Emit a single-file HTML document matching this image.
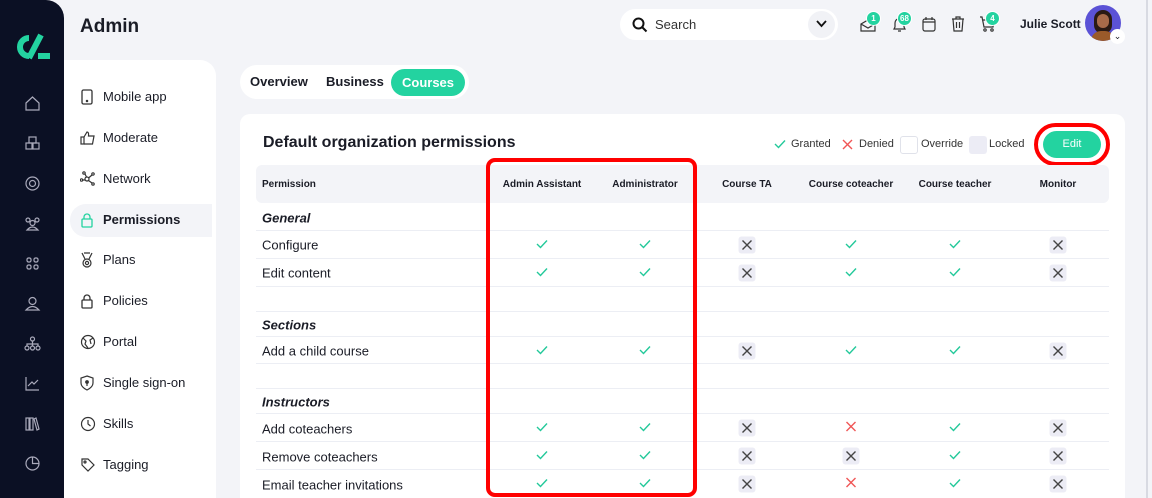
<!DOCTYPE html>
<html><head><meta charset="utf-8"><style>
*{margin:0;padding:0;box-sizing:border-box}
html,body{width:1152px;height:498px;overflow:hidden}
body{background:#f3f4f8;font-family:"Liberation Sans",sans-serif;color:#1a1c26;position:relative}
.a{position:absolute}
.side{left:0;top:0;width:64px;height:498px;background:#0b1024;border-top-right-radius:18px}
.si{position:absolute;left:24px;width:17px;height:17px}
.nav{left:64px;top:60px;width:152px;height:438px;background:#fff;border-top-right-radius:16px}
.ni{position:absolute;left:16px;font-size:13px;height:20px;line-height:20px;color:#1a1c26}
.ni svg{position:absolute;left:0;top:2px}
.ni span{position:absolute;left:23px;white-space:nowrap}
.card{left:240px;top:114px;width:885px;height:384px;background:#fff;border-radius:10px 10px 0 0}
.th{position:absolute;top:165px;left:256px;width:853px;height:38px;background:#f3f4f8;border-radius:6px}
.hc{position:absolute;top:179px;font-size:10px;font-weight:bold;transform:translateX(-50%);white-space:nowrap}
.row{position:absolute;left:256px;width:853px;border-bottom:1px solid #eceef4}
.lab{position:absolute;left:262px;font-size:13px;transform:translateY(-50%);white-space:nowrap}
.sec{font-weight:bold;font-style:italic}
.ic{position:absolute;transform:translate(-50%,-50%)}
.lk{width:17px;height:17px;background:#ececf5;border-radius:3px;display:flex;align-items:center;justify-content:center}
.badge{position:absolute;background:#23d3a0;color:#fff;font-size:8px;font-weight:bold;border-radius:8px;height:15px;min-width:15px;padding:0 2px;text-align:center;line-height:13px;border:1px solid #fff}
</style></head><body>
<div class="a side">
<svg class="a" style="left:12px;top:33px" width="40" height="28" viewBox="0 0 40 28"><path d="M17 5 A9 9 0 1 0 17 23" stroke="#23d3a0" stroke-width="6" fill="none"/><path d="M29 2 L17 25" stroke="#23d3a0" stroke-width="6"/><rect x="26" y="20" width="12" height="6" fill="#23d3a0"/></svg>
<svg class="si" style="top:95px" viewBox="0 0 17 17" fill="none" stroke="#aab" stroke-width="1.2"><path d="M2 8 L8.5 2 L15 8 V15 H2Z"/></svg>
<svg class="si" style="top:135px" viewBox="0 0 17 17" fill="none" stroke="#aab" stroke-width="1.2"><rect x="5" y="2" width="7" height="6"/><rect x="2" y="8" width="6" height="6"/><rect x="9" y="8" width="6" height="6"/></svg>
<svg class="si" style="top:175px" viewBox="0 0 17 17" fill="none" stroke="#aab" stroke-width="1.2"><circle cx="8.5" cy="8.5" r="6.5"/><circle cx="8.5" cy="8.5" r="3"/></svg>
<svg class="si" style="top:215px" viewBox="0 0 17 17" fill="none" stroke="#aab" stroke-width="1.2"><circle cx="4" cy="5" r="2"/><circle cx="13" cy="5" r="2"/><circle cx="8.5" cy="8" r="2.5"/><path d="M3 15 Q8.5 9 14 15Z"/></svg>
<svg class="si" style="top:255px" viewBox="0 0 17 17" fill="none" stroke="#aab" stroke-width="1.2"><rect x="3" y="3" width="4" height="4" rx="1.5"/><rect x="10" y="3" width="4" height="4" rx="1.5"/><rect x="3" y="10" width="4" height="4" rx="1.5"/><rect x="10" y="10" width="4" height="4" rx="1.5"/></svg>
<svg class="si" style="top:295px" viewBox="0 0 17 17" fill="none" stroke="#aab" stroke-width="1.2"><circle cx="8.5" cy="6" r="3.5"/><path d="M2 15 Q8.5 8 15 15Z"/></svg>
<svg class="si" style="top:335px" viewBox="0 0 17 17" fill="none" stroke="#aab" stroke-width="1.2"><circle cx="8.5" cy="4" r="2"/><circle cx="3" cy="13" r="2"/><circle cx="8.5" cy="13" r="2"/><circle cx="14" cy="13" r="2"/><path d="M8.5 6V11M3 11V9H14V11"/></svg>
<svg class="si" style="top:375px" viewBox="0 0 17 17" fill="none" stroke="#aab" stroke-width="1.2"><path d="M2 2V15H15M4 11L8 7L10 9L14 5"/></svg>
<svg class="si" style="top:415px" viewBox="0 0 17 17" fill="none" stroke="#aab" stroke-width="1.2"><rect x="2" y="3" width="3" height="12"/><rect x="6" y="3" width="3" height="12"/><path d="M10 4L12 3L15 14L13 15Z"/></svg>
<svg class="si" style="top:455px" viewBox="0 0 17 17" fill="none" stroke="#aab" stroke-width="1.2"><circle cx="8.5" cy="8.5" r="6.5"/><path d="M8.5 2V8.5H15"/></svg>
</div>
<div class="a" style="left:80px;top:16px;font-size:19px;font-weight:bold">Admin</div>
<div class="a nav">
<div class="a" style="left:6px;top:144px;width:142px;height:33px;background:#f3f4f8;border-radius:16px 0 0 16px"></div>
<div class="ni" style="top:27px"><svg width="14" height="16" viewBox="0 0 14 16" fill="none" stroke="#333" stroke-width="1.3"><rect x="2" y="1" width="10" height="14" rx="1.5"/><circle cx="7" cy="12" r=".6" fill="#333"/></svg><span>Mobile app</span></div>
<div class="ni" style="top:68px"><svg width="16" height="16" viewBox="0 0 16 16" fill="none" stroke="#333" stroke-width="1.2"><rect x="1" y="7" width="3" height="7"/><path d="M4 7L7 2Q9 2 8.5 6H14L12.5 14H4"/></svg><span>Moderate</span></div>
<div class="ni" style="top:109px"><svg width="16" height="16" viewBox="0 0 16 16" fill="none" stroke="#333" stroke-width="1.2"><circle cx="7" cy="8" r="2"/><circle cx="4" cy="2" r="1.2"/><circle cx="13" cy="3" r="1.2"/><circle cx="1.5" cy="9" r="1.2"/><circle cx="13" cy="13" r="1.2"/><path d="M5 3L6.5 6M12 4L8.5 7M3 9H5M8.5 9.5L12 12"/></svg><span>Network</span></div>
<div class="ni" style="top:150px"><svg width="14" height="16" viewBox="0 0 14 16" fill="none" stroke="#23d3a0" stroke-width="1.3"><rect x="2" y="7" width="10" height="8" rx="1"/><path d="M4 7V5A3 3 0 0 1 10 5V7"/></svg><span style="font-weight:bold">Permissions</span></div>
<div class="ni" style="top:190px"><svg width="14" height="16" viewBox="0 0 14 16" fill="none" stroke="#333" stroke-width="1.2"><path d="M2 1L5 7M12 1L9 7M4 1H10"/><circle cx="7" cy="11" r="4"/><circle cx="7" cy="11" r="1.6"/></svg><span>Plans</span></div>
<div class="ni" style="top:231px"><svg width="14" height="16" viewBox="0 0 14 16" fill="none" stroke="#333" stroke-width="1.3"><rect x="2" y="7" width="10" height="8" rx="1"/><path d="M4 7V5A3 3 0 0 1 10 5V7"/></svg><span>Policies</span></div>
<div class="ni" style="top:272px"><svg width="16" height="16" viewBox="0 0 16 16" fill="none" stroke="#333" stroke-width="1.2"><circle cx="8" cy="8" r="6.5"/><path d="M3 4L6 7L5 10L8 14M13 4L10 6L11 10"/></svg><span>Portal</span></div>
<div class="ni" style="top:313px"><svg width="14" height="16" viewBox="0 0 14 16" fill="none" stroke="#333" stroke-width="1.2"><path d="M7 1L13 3V8Q13 12 7 15Q1 12 1 8V3Z"/><circle cx="7" cy="7" r="1.3" fill="#333"/><path d="M7 8V11"/></svg><span>Single sign-on</span></div>
<div class="ni" style="top:354px"><svg width="16" height="16" viewBox="0 0 16 16" fill="none" stroke="#333" stroke-width="1.2"><circle cx="8" cy="8" r="6.5"/><path d="M8 4V8L10.5 10"/></svg><span>Skills</span></div>
<div class="ni" style="top:395px"><svg width="16" height="16" viewBox="0 0 16 16" fill="none" stroke="#333" stroke-width="1.2"><path d="M2 2H8L14 8L8 14L2 8Z"/><circle cx="5" cy="5" r="1"/></svg><span>Tagging</span></div>
</div>
<!-- tabs -->
<div class="a" style="left:240px;top:65px;width:229px;height:34px;background:#fff;border-radius:17px"></div>
<div class="a" style="left:250px;top:74px;font-size:13px;font-weight:bold">Overview</div>
<div class="a" style="left:326px;top:74px;font-size:13px;font-weight:bold">Business</div>
<div class="a" style="left:391px;top:69px;width:74px;height:27px;background:#23d3a0;border-radius:14px;color:#fff;font-size:13px;font-weight:bold;text-align:center;line-height:27px">Courses</div>
<!-- top bar -->
<div class="a" style="left:620px;top:9px;width:218px;height:31px;background:#fff;border-radius:16px"></div>
<svg class="a" style="left:632px;top:17px" width="16" height="16" viewBox="0 0 16 16" fill="none" stroke="#111" stroke-width="2"><circle cx="6.5" cy="6.5" r="5"/><path d="M10 10L14.5 14.5"/></svg>
<div class="a" style="left:655px;top:17px;font-size:13px;color:#333">Search</div>
<div class="a" style="left:808px;top:11px;width:27px;height:27px;background:#f1f2f6;border-radius:50%"></div>
<svg class="a" style="left:815px;top:18px" width="13" height="12" viewBox="0 0 13 12" fill="none" stroke="#111" stroke-width="1.8"><path d="M2 3L6.5 8L11 3"/></svg>
<svg class="a" style="left:860px;top:17px" width="16" height="16" viewBox="0 0 16 16" fill="none" stroke="#333" stroke-width="1.2"><path d="M1 7L8 3L15 7V14H1Z M1 7L8 11L15 7"/></svg>
<div class="badge" style="left:866px;top:11px">1</div>
<svg class="a" style="left:892px;top:16px" width="15" height="17" viewBox="0 0 15 17" fill="none" stroke="#333" stroke-width="1.2"><path d="M2 13H13L12 11V7A4.5 4.5 0 0 0 3 7V11Z M6 15H9"/></svg>
<div class="badge" style="left:897px;top:11px">68</div>
<svg class="a" style="left:922px;top:16px" width="14" height="16" viewBox="0 0 14 16" fill="none" stroke="#333" stroke-width="1.2"><rect x="1" y="3" width="12" height="12" rx="2"/><path d="M1 6H13M4 1V4M10 1V4"/></svg>
<svg class="a" style="left:951px;top:16px" width="14" height="16" viewBox="0 0 14 16" fill="none" stroke="#333" stroke-width="1.2"><path d="M1 3H13M5 3V1H9V3M2 3L3 15H11L12 3M5.5 6V12M8.5 6V12"/></svg>
<svg class="a" style="left:979px;top:16px" width="17" height="16" viewBox="0 0 17 16" fill="none" stroke="#333" stroke-width="1.2"><path d="M1 1H3L5 11H14L15 4H4"/><circle cx="6" cy="14" r="1.2"/><circle cx="13" cy="14" r="1.2"/></svg>
<div class="badge" style="left:985px;top:11px">4</div>
<div class="a" style="left:1020px;top:17px;font-size:12px;font-weight:bold">Julie Scott</div>
<div class="a" style="left:1085px;top:5px;width:36px;height:36px;border-radius:50%;background:#5b52d6;overflow:hidden">
<div class="a" style="left:9px;top:5px;width:18px;height:24px;border-radius:9px;background:#2a1a14"></div>
<div class="a" style="left:12px;top:9px;width:12px;height:14px;border-radius:6px;background:#a86b4a"></div>
<div class="a" style="left:6px;top:26px;width:24px;height:14px;border-radius:10px 10px 0 0;background:#9a5a2a"></div>
</div>
<div class="a" style="left:1110px;top:29px;width:15px;height:15px;border-radius:50%;background:#fff;font-size:9px;text-align:center;line-height:14px">⌄</div>
<div class="a" style="left:1146px;top:0;width:2px;height:498px;background:#d8dae2"></div>
<!-- card -->
<div class="a card"></div>
<div class="a" style="left:263px;top:134px;font-size:16px;font-weight:bold">Default organization permissions</div>
<svg class="a" style="left:774px;top:139px" width="12" height="10" viewBox="0 0 12 10" fill="none" stroke="#23c99a" stroke-width="1.4"><path d="M1 5L4.5 8.5L11 1.5"/></svg>
<div class="a" style="left:791px;top:138px;font-size:11px;color:#333">Granted</div>
<svg class="a" style="left:842px;top:139px" width="11" height="11" viewBox="0 0 11 11" fill="none" stroke="#f05555" stroke-width="1.4"><path d="M1 1L10 10M10 1L1 10"/></svg>
<div class="a" style="left:859px;top:138px;font-size:11px;color:#333">Denied</div>
<div class="a" style="left:900px;top:136px;width:18px;height:18px;border:1px solid #e0e2ea;border-radius:3px;background:#fff"></div>
<div class="a" style="left:921px;top:138px;font-size:11px;color:#333">Override</div>
<div class="a" style="left:969px;top:136px;width:18px;height:18px;border-radius:3px;background:#ececf5"></div>
<div class="a" style="left:989px;top:138px;font-size:11px;color:#333">Locked</div>
<div class="a" style="left:1043px;top:131px;width:58px;height:27px;background:#23d3a0;border-radius:14px;color:#fff;font-size:11px;text-align:center;line-height:27px">Edit</div>
<div class="a" style="left:1034px;top:123px;width:76px;height:43px;border:4px solid #f00;border-radius:22px"></div>
<div class="th"></div>
<div class="hc" style="left:262px;transform:none">Permission</div>
<div class="hc" style="left:542px">Admin Assistant</div>
<div class="hc" style="left:645px">Administrator</div>
<div class="hc" style="left:747px">Course TA</div>
<div class="hc" style="left:851px">Course coteacher</div>
<div class="hc" style="left:955px">Course teacher</div>
<div class="hc" style="left:1058px">Monitor</div>
<div class="row" style="top:203px;height:28px"></div>
<div class="row" style="top:231px;height:28px"></div>
<div class="row" style="top:259px;height:28px"></div>
<div class="row" style="top:287px;height:25px"></div>
<div class="row" style="top:312px;height:25px"></div>
<div class="row" style="top:337px;height:27px"></div>
<div class="row" style="top:364px;height:25px"></div>
<div class="row" style="top:389px;height:25px"></div>
<div class="row" style="top:414px;height:28px"></div>
<div class="row" style="top:442px;height:28px"></div>
<div class="lab sec" style="top:218px">General</div>
<div class="lab" style="top:245px">Configure</div>
<div class="lab" style="top:273px">Edit content</div>
<div class="lab sec" style="top:325px">Sections</div>
<div class="lab" style="top:351px">Add a child course</div>
<div class="lab sec" style="top:402px">Instructors</div>
<div class="lab" style="top:429px">Add coteachers</div>
<div class="lab" style="top:457px">Remove coteachers</div>
<div class="lab" style="top:485px">Email teacher invitations</div>
<div id="cells"></div>
<div class="a" style="left:486px;top:158px;width:211px;height:339px;border:4px solid #f00;border-radius:9px"></div>
<script>
var G='<svg width="12" height="10" viewBox="0 0 12 10" fill="none" stroke="#23c99a" stroke-width="1.4"><path d="M1 5L4.5 8.5L11 1.5"/></svg>';
var D='<svg width="11" height="11" viewBox="0 0 11 11" fill="none" stroke="#f05555" stroke-width="1.4"><path d="M1 1L10 10M10 1L1 10"/></svg>';
var L='<div class="lk"><svg width="11" height="11" viewBox="0 0 11 11" fill="none" stroke="#444" stroke-width="1.4"><path d="M1 1L10 10M10 1L1 10"/></svg></div>';
var xs=[542,645,747,851,955,1058];
var rows=[[245,'GGLGGL'],[273,'GGLGGL'],[351,'GGLGGL'],[428,'GGLDGL'],[456,'GGLLGL'],[484,'GGLDGL']];
var h='';rows.forEach(function(r){for(var i=0;i<6;i++){var c=r[1][i];h+='<div class="ic" style="left:'+xs[i]+'px;top:'+r[0]+'px">'+(c=='G'?G:c=='D'?D:L)+'</div>';}});
document.getElementById('cells').innerHTML=h;
</script>
</body></html>
